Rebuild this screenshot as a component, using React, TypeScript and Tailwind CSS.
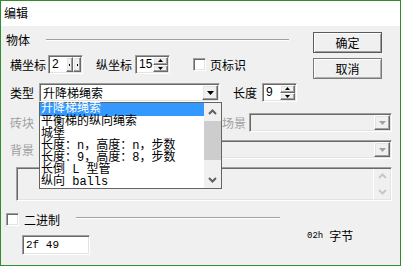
const sunken =
  "border border-t-[#a0a0a0] border-l-[#a0a0a0] border-r-white border-b-white shadow-[inset_1px_1px_0_#696969,inset_-1px_-1px_0_#e3e3e3]";
const raised =
  "bg-[#f0f0f0] border border-t-white border-l-white border-r-[#696969] border-b-[#696969] shadow-[inset_-1px_-1px_0_#a0a0a0,inset_1px_1px_0_#e3e3e3]";
const cjk = "font-['Noto_Sans_CJK_SC',sans-serif]";
const mono = "font-['Liberation_Mono','Noto_Sans_CJK_SC',monospace]";

function Tri({ down = true, color = "#000", w = 7, h = 4 }: { down?: boolean; color?: string; w?: number; h?: number }) {
  return (
    <svg width={w} height={h} viewBox={`0 0 ${w} ${h}`}>
      <path d={down ? `M0 0H${w}L${w / 2} ${h}z` : `M${w / 2} 0L${w} ${h}H0z`} fill={color} />
    </svg>
  );
}

function Chevron({ up, color }: { up?: boolean; color: string }) {
  return (
    <svg width="9" height="6" viewBox="0 0 9 6">
      <path d={up ? "M1 5L4.5 1.5L8 5" : "M1 1L4.5 4.5L8 1"} fill="none" stroke={color} strokeWidth="2" />
    </svg>
  );
}

function Spin({ v, split }: { v: string; split?: boolean }) {
  return (
    <div className={`flex w-[35px] h-[19px] bg-white p-[1px] ${sunken}`}>
      <div className="flex-1 pl-[2px] text-[12px] leading-[15px] font-['Liberation_Sans',sans-serif]">{v}</div>
      {split ? (
        <div className="flex w-[15px]">
          <div className={`w-[7px] flex items-center justify-center ${raised}`}>
            <div className="w-[1px] h-[2px] bg-black" />
          </div>
          <div className={`w-[8px] flex items-center justify-center ${raised}`}>
            <div className="w-[1px] h-[2px] bg-black" />
          </div>
        </div>
      ) : (
        <div className="flex flex-col w-[15px]">
          <div className={`flex-1 flex items-center justify-center ${raised}`}>
            <Tri down={false} w={5} h={3} />
          </div>
          <div className={`flex-1 flex items-center justify-center ${raised}`}>
            <Tri w={5} h={3} />
          </div>
        </div>
      )}
    </div>
  );
}

function Combo({ w, text, disabled }: { w: string; text?: string; disabled?: boolean }) {
  return (
    <div className={`flex h-[19px] p-[1px] ${w} ${disabled ? "bg-[#f0f0f0]" : "bg-white"} ${sunken}`}>
      <div className="flex-1 pl-[2px] text-[12px] leading-[15px] whitespace-nowrap">{text}</div>
      <div className={`w-[16px] flex items-center justify-center ${raised}`}>
        <Tri color={disabled ? "#a0a0a0" : "#000"} />
      </div>
    </div>
  );
}

function Check() {
  return <div className={`w-[13px] h-[13px] bg-white p-[1px] shrink-0 ${sunken}`} />;
}

function Etched({ w }: { w: string }) {
  return <div className={`h-[2px] border-t border-t-[#a0a0a0] border-b border-b-white ${w}`} />;
}

const items = [
  "升降梯绳索",
  "平衡梯的纵向绳索",
  "城堡",
  "长度：n，高度：n，步数",
  "长度：9，高度：8，步数",
  "长倒 L 型管",
  "纵向 balls",
];

export default function App() {
  return (
    <div className={`w-[401px] h-[266px] border border-[#2f8f2f] flex flex-col text-black ${cjk}`}>
      <div className="h-[25px] bg-white pl-[3px] pt-[5px] text-[12px] leading-[14px]">编辑</div>

      <div className="relative flex-1 bg-[#f0f0f0] pl-[5px] pt-[6px] text-[12px]">
        <div className="flex">
          <div className="w-[307px]">
            <div className="mt-[1px] h-[14px] flex items-center">
              <span className="leading-[14px]">物体</span>
              <div className="ml-[16px]">
                <Etched w="w-[243px]" />
              </div>
            </div>
            <div className="mt-[8px] h-[19px] flex items-center pl-[4px]">
              <span className="w-[36px] leading-[14px]">横坐标</span>
              <div className="ml-[2px]">
                <Spin v="2" split />
              </div>
              <span className="ml-[13px] w-[36px] leading-[14px]">纵坐标</span>
              <div className="ml-[3px]">
                <Spin v="15" />
              </div>
              <div className="ml-[23px]">
                <Check />
              </div>
              <span className="ml-[4px] leading-[14px]">页标识</span>
            </div>
            <div className="mt-[9px] h-[19px] flex items-center pl-[4px]">
              <span className="w-[24px] leading-[14px]">类型</span>
              <div className="ml-[5px]">
                <Combo w="w-[181px]" text="升降梯绳索" />
              </div>
              <span className="ml-[13px] w-[24px] leading-[14px]">长度</span>
              <div className="ml-[5px]">
                <Spin v="9" />
              </div>
            </div>
          </div>
          <div className="w-[69px] flex flex-col gap-[5px]">
            <button className="h-[21px] w-[69px] bg-[#f0f0f0] border border-[#5a5a5a] shadow-[inset_1px_1px_0_#fff,inset_-1px_-1px_0_#a0a0a0] text-[12px] leading-[14px]">
              确定
            </button>
            <button className="h-[21px] w-[69px] bg-[#f0f0f0] border border-[#7a7a7a] shadow-[inset_1px_1px_0_#fff,inset_-1px_-1px_0_#b0b0b0] text-[12px] leading-[14px]">
              取消
            </button>
          </div>
        </div>

        <div className="mt-[11px] h-[19px] flex items-center pl-[4px] text-[#a0a0a0]">
          <span className="w-[24px] leading-[14px]">砖块</span>
          <div className="ml-[5px]">
            <Combo w="w-[177px]" disabled />
          </div>
          <span className="ml-[6px] w-[24px] leading-[14px]">场景</span>
          <div className="ml-[3px]">
            <Combo w="w-[143px]" disabled />
          </div>
        </div>

        <div className="mt-[8px] h-[19px] flex items-center pl-[4px] text-[#a0a0a0]">
          <span className="w-[24px] leading-[14px]">背景</span>
          <div className="ml-[5px]">
            <Combo w="w-[353px]" disabled />
          </div>
        </div>

        <div className={`mt-[8px] ml-[10px] w-[376px] h-[34px] p-[1px] bg-[#f0f0f0] flex justify-end ${sunken}`}>
          <div className="w-[17px] border-l border-l-white flex flex-col items-center justify-between py-[4px]">
            <Chevron up color="#c8c8c8" />
            <Chevron color="#c8c8c8" />
          </div>
        </div>

        <div className="mt-[12px] h-[13px] flex items-center">
          <Check />
          <span className="ml-[5px] leading-[14px]">二进制</span>
          <div className="ml-[16px] mb-[3px]">
            <Etched w="w-[204px]" />
          </div>
        </div>

        <div className="mt-[4px] flex items-start">
          <div className={`ml-[16px] mt-[5px] w-[68px] h-[20px] bg-white p-[1px] ${sunken}`}>
            <div className={`pl-[2px] text-[11px] leading-[16px] ${mono}`}>2f 49</div>
          </div>
          <div className="ml-[217px] flex items-center h-[12px] gap-[6px] whitespace-nowrap">
            <span className={`text-[9px] leading-[12px] ${mono}`}>02h</span>
            <span className="text-[12px] leading-[12px]">字节</span>
          </div>
        </div>

        {/* 下拉列表 */}
        <div className="absolute left-[38px] top-[76px] w-[183px] h-[87px] bg-white border border-[#646464] flex">
          <div className={`w-[164px] text-[12px] ${mono}`}>
            {items.map((t, i) => (
              <div
                key={t}
                className={`pl-[1px] whitespace-nowrap ${
                  i === 0 ? "h-[13px] leading-[13px] bg-[#3399ff] text-white" : "h-[12px] leading-[12px]"
                }`}
              >
                {t}
              </div>
            ))}
          </div>
          <div className="w-[17px] bg-[#f0f0f0] flex flex-col">
            <div className="h-[17px] flex items-center justify-center">
              <Chevron up color="#606060" />
            </div>
            <div className="mt-[1px] h-[39px] bg-[#cdcdcd]" />
            <div className="flex-1" />
            <div className="h-[17px] flex items-center justify-center">
              <Chevron color="#606060" />
            </div>
          </div>
        </div>
      </div>
    </div>
  );
}
